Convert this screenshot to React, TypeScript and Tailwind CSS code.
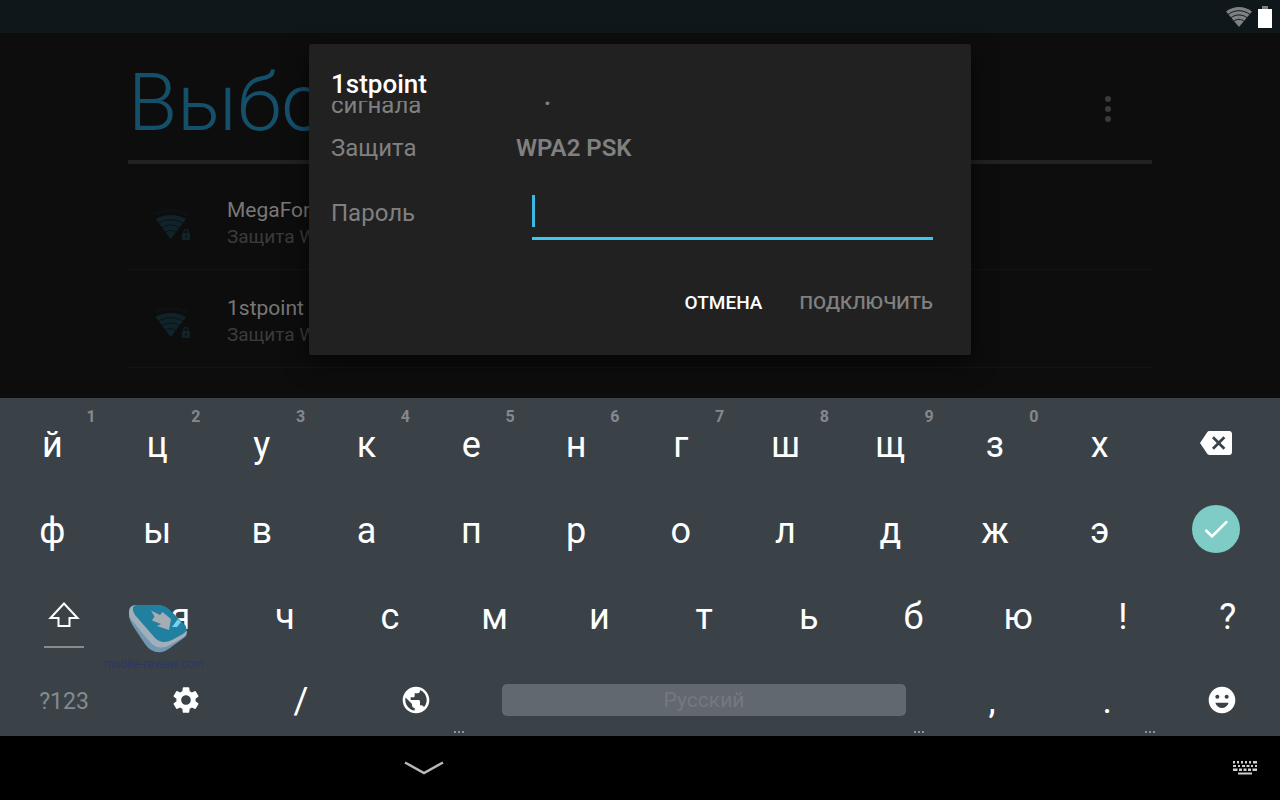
import type { ReactNode } from 'react'
import { MdBackspace, MdCheck, MdEmojiEmotions, MdPublic, MdSettings } from 'react-icons/md'

interface Network {
  name: string
  security: string
}

const networks: Network[] = [
  { name: 'MegaFon', security: 'Защита WPA2' },
  { name: '1stpoint', security: 'Защита WPA2' },
]

const topRow = ['й', 'ц', 'у', 'к', 'е', 'н', 'г', 'ш', 'щ', 'з', 'х']
const middleRow = ['ф', 'ы', 'в', 'а', 'п', 'р', 'о', 'л', 'д', 'ж', 'э']
const bottomRow = ['я', 'ч', 'с', 'м', 'и', 'т', 'ь', 'б', 'ю', '!', '?']
const hints = ['1', '2', '3', '4', '5', '6', '7', '8', '9', '0']

function StatusBar() {
  return (
    <header className="flex h-[33px] items-center justify-end gap-1.5 bg-[#10171a] pr-2">
      <svg className="h-5 w-[26px]" viewBox="0 0 26 20" fill="none">
        <path d="M0 4.5C7.5-1.5 18.5-1.5 26 4.5L13 20Z" fill="#7d8184" />
        <path d="M2 7.6C8.5 2.4 17.5 2.4 24 7.6M4.5 11C9.5 6.9 16.5 6.9 21.500 11M7.500 14.400C10.800 11.700 15.200 11.700 18.500 14.400" stroke="#10171a" strokeWidth="1" />
      </svg>
      <svg className="h-[22px] w-[14px]" viewBox="0 0 14 22">
        <path d="M4 0h6v3H4z" fill="#7d8184" />
        <path d="M0 3h14v19H0z" fill="#fff" />
      </svg>
    </header>
  )
}

function NetworkIcon() {
  return (
    <svg className="h-9 w-10 shrink-0" viewBox="0 0 40 36" fill="none">
      <path d="M1 8C12 2 26 2 37 8L34 11C25 6 13 6 4 11Z" fill="#0e1112" />
      <path d="M3.500 14C12.500 8.500 25 8.500 34 14L18.700 34Z" fill="#10232b" />
      <path d="M6 18.500C13.500 13.500 24 13.500 31.500 18.500M9.500 23C15 19 22.500 19 28 23M13 27.500C16.500 25 21 25 24.500 27.500" stroke="#0d1113" strokeWidth="1" />
      <path d="M28 24h12v12H28z" fill="#0d0d0d" />
      <path d="M30 28h8v7h-8z" fill="#10232b" />
      <path d="M32 28v-1.500a2 2 0 0 1 4 0V28" stroke="#10232b" strokeWidth="1.300" />
      <circle cx="34" cy="31.500" r="1" fill="#0d0d0d" />
    </svg>
  )
}

function NetworkList() {
  return (
    <main className="mx-[10%]">
      <div className="flex items-center justify-between border-b-4 border-[#222222] pt-[30px] pb-[17px]">
        <h1 className="text-[80px] leading-[80px] font-light text-[#15506a]">Выбор</h1>
        <button aria-label="Меню" className="mt-3 mr-6 flex h-10 w-10 items-center justify-center">
          <svg className="h-7 w-2" viewBox="0 0 8 28" fill="#3a3a3a">
            <circle cx="4" cy="4" r="3" />
            <circle cx="4" cy="14" r="3" />
            <circle cx="4" cy="24" r="3" />
          </svg>
        </button>
      </div>
      <ul className="pt-2">
        {networks.map((network) => (
          <li key={network.name} className="flex items-center gap-[35px] border-b border-[#141414] pt-6 pb-[19px] pl-6">
            <NetworkIcon />
            <div>
              <div className="text-[21px] leading-7 text-[#787878]">{network.name}</div>
              <div className="text-[19px] leading-[26px] text-[#3b3b3b]">{network.security}</div>
            </div>
          </li>
        ))}
      </ul>
    </main>
  )
}

function PasswordDialog() {
  return (
    <div className="absolute inset-0 flex items-center justify-center">
      <form
        role="dialog"
        aria-labelledby="dialog-title"
        className="w-full max-w-[662px] rounded-xs bg-[#212121] pt-6 pb-[38px] shadow-[0_8px_24px_rgba(0,0,0,0.6)]"
        onSubmit={(e) => e.preventDefault()}
      >
        <h2 id="dialog-title" className="px-[22px] text-[26px] leading-[33px] font-medium text-white">
          1stpoint
        </h2>
        {/* the body is scrolled, its first line is cut by the title */}
        <div className="overflow-hidden pr-[38px] pl-[22px] text-2xl leading-8 text-[#808080]">
          <div className="-mt-5 flex items-start">
            <span className="w-[185px] pt-2">сигнала</span>
            <span className="pl-7 font-bold">.</span>
          </div>
          <div className="mt-[11px] flex">
            <span className="w-[185px]">Защита</span>
            <span className="font-semibold">WPA2 PSK</span>
          </div>
          <div className="mt-[31px] flex items-start">
            <label htmlFor="password" className="w-[201px] pt-0.5">
              Пароль
            </label>
            <div className="relative flex-1">
              <input
                id="password"
                type="password"
                className="block h-[45px] w-full border-b-[3px] border-[#3fc8ee] bg-transparent pb-2 text-white outline-none"
              />
              <span className="absolute top-0 left-0 h-8 w-[3px] bg-[#3cb8e2]" />
            </div>
          </div>
        </div>
        <div className="mt-[49px] flex justify-end gap-[37px] pr-[38px] text-[19px] leading-7 font-medium">
          <button type="button" className="text-white">
            ОТМЕНА
          </button>
          <button type="submit" className="text-[#808080]">
            ПОДКЛЮЧИТЬ
          </button>
        </div>
      </form>
    </div>
  )
}

function LetterKey({ letter, hint }: { letter: string; hint?: string }) {
  return (
    <button className="relative flex min-w-0 flex-[9] items-center justify-center text-4xl leading-none">
      <span className="pt-1">{letter}</span>
      {hint && <span className="absolute top-2 right-[9px] text-base leading-[18px] font-bold text-[#85888d]">{hint}</span>}
    </button>
  )
}

function ActionKey({ label, className, children }: { label: string; className: string; children: ReactNode }) {
  return (
    <button aria-label={label} className={`relative flex min-w-0 items-center justify-center ${className}`}>
      {children}
    </button>
  )
}

function MoreDots() {
  return (
    <svg className="absolute right-2.5 bottom-[3px] h-0.5 w-2.5" viewBox="0 0 10 2" fill="#8c9295">
      <path d="M0 0h2v2H0zM4 0h2v2H4zM8 0h2v2H8z" />
    </svg>
  )
}

function Keyboard() {
  return (
    <section className="relative bg-[#3a4248] pt-0.5 text-white">
      <div className="flex h-[86px]">
        {topRow.map((letter, i) => (
          <LetterKey key={letter} letter={letter} hint={hints[i]} />
        ))}
        <ActionKey label="Удалить" className="flex-[11]">
          <MdBackspace className="size-8" />
        </ActionKey>
      </div>
      <div className="flex h-[86px]">
        {middleRow.map((letter) => (
          <LetterKey key={letter} letter={letter} />
        ))}
        <ActionKey label="Готово" className="flex-[11]">
          <span className="flex size-12 items-center justify-center rounded-full bg-[#7fcbc5]">
            <MdCheck className="size-8" />
          </span>
        </ActionKey>
      </div>
      <div className="flex h-[86px]">
        <ActionKey label="Shift" className="flex-[11]">
          <svg className="h-7 w-8" viewBox="0 0 32 28" fill="none" stroke="currentColor" strokeWidth="2">
            <path d="M16 2.500L2.500 17H10.500V25H21.500V17H29.500Z" />
          </svg>
          <span className="absolute bottom-2.5 h-0.5 w-10 bg-[#858b8f]" />
        </ActionKey>
        {bottomRow.map((letter) => (
          <LetterKey key={letter} letter={letter} />
        ))}
      </div>
      <div className="flex h-[78px] text-4xl leading-none">
        <button className="min-w-0 flex-[10] pt-2 text-[23px] text-[#858a8e]">?123</button>
        <ActionKey label="Настройки" className="flex-[9] pt-1.5">
          <MdSettings className="size-8" />
        </ActionKey>
        <button className="min-w-0 flex-[9] pt-2">/</button>
        <ActionKey label="Язык" className="flex-[9] pt-1.5">
          <MdPublic className="size-8" />
          <MoreDots />
        </ActionKey>
        <ActionKey label="Пробел" className="flex-[36] pt-1.5">
          <span className="mx-7 h-8 flex-1 rounded-[5px] bg-[#62686f] text-[21px] leading-8 text-[#747880]">Русский</span>
          <MoreDots />
        </ActionKey>
        <button className="min-w-0 flex-[9] pt-2">,</button>
        <ActionKey label="Точка" className="flex-[9] pt-2">
          .
          <MoreDots />
        </ActionKey>
        <ActionKey label="Эмодзи" className="flex-[9] pt-1.5">
          <MdEmojiEmotions className="size-8" />
        </ActionKey>
      </div>
      <Watermark />
    </section>
  )
}

function Watermark() {
  return (
    <div className="pointer-events-none absolute bottom-16 left-[104px]">
      <svg className="ml-[25px] h-[50px] w-[60px]" viewBox="0 0 60 50">
        <path d="M0 8V13Q1 17 4 22L16 40Q23 50 33 48Q37 47 41 44L56 33Q58 31 58 27Z" fill="#7198b3" />
        <path d="M0 8Q0 1 7 1L31 1L57 26Q59 30 55 33L41 41Q30 47 22 39Q17 34 2 15Q0 12 0 8Z" fill="#a3afb8" />
        <path d="M4 6Q3 1 9 1H29Q36 1 41 6L56 21Q60 26 54 30L43 36Q33 41 26 34L6 11Q4 8 4 6Z" fill="#217f9f" />
        <path d="M22 6.500L31 11L33.500 8L42 15L40 26L28 22L32 20L23 16.500L25.500 12.500Z" fill="#a3adb3" />
        <path d="M49 15L52 18L48 23H43Z" fill="#75d3ef" />
      </svg>
      <span className="mt-0.5 block font-['Liberation_Sans',sans-serif] text-xs leading-4 text-[#2b3766]">mobile-review.com</span>
    </div>
  )
}

function NavigationBar() {
  return (
    <nav className="flex h-16 items-center bg-black">
      <div className="flex flex-[106] justify-center">
        <button aria-label="Скрыть клавиатуру">
          <svg className="h-4 w-10" viewBox="0 0 40 16" fill="none" stroke="#b9b9b9" strokeWidth="2.500">
            <path d="M1 2.500L20 13L39 2.500" />
          </svg>
        </button>
      </div>
      <div className="flex flex-[54] justify-end">
        <button aria-label="Способ ввода" className="mr-[22px]">
          <svg className="h-[14px] w-[26px]" viewBox="0 0 26 14" fill="#cfcfcf">
            <path d="M1 0h2v2.500H1zM5 0h2v2.500H5zM9 0h2v2.500H9zM13 0h2v2.500h-2zM17 0h2v2.500h-2zM21 0h4v2.500h-4z" />
            <path d="M1 4h3v2H1zM6 4h2v2H6zM10 4h3v2h-3zM14.500 4h3v2h-3zM19 4h2v2h-2zM23 4h2v2h-2z" />
            <path d="M1 7.500h4.500v2.500H1zM7 7.500h3v2.500H7zM11.500 7.500h3v2.500h-3zM16 7.500h3v2.500h-3zM20.500 7.500H25v2.500h-4.500z" />
            <path d="M6 11.500h14v2H6z" />
          </svg>
        </button>
      </div>
    </nav>
  )
}

export default function App() {
  return (
    <div className="flex h-screen flex-col bg-[#0d0d0d] font-[Roboto,sans-serif]">
      <div className="relative min-h-0 flex-1 overflow-hidden">
        <StatusBar />
        <NetworkList />
        <PasswordDialog />
      </div>
      <Keyboard />
      <NavigationBar />
    </div>
  )
}
